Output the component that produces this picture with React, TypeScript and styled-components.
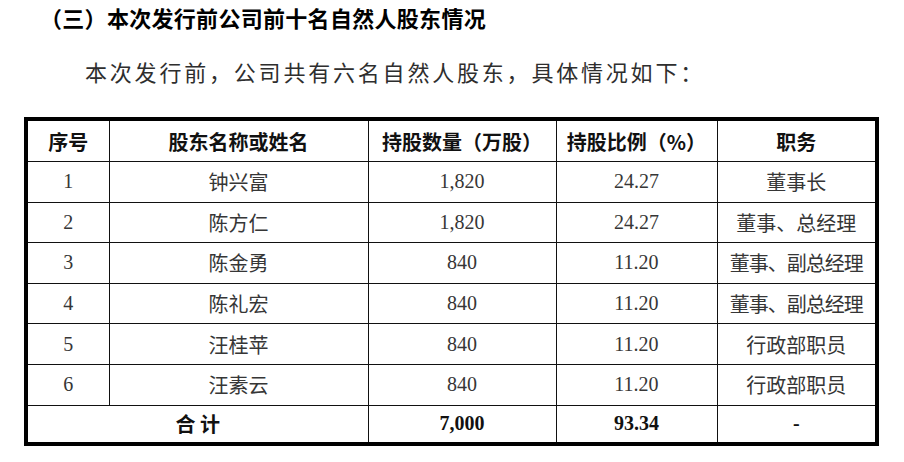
import styled, { createGlobalStyle } from "styled-components"

type Holder = {
  no: number
  name: string
  shares: string
  ratio: string
  post: string
}

const holders: Holder[] = [
  { no: 1, name: "钟兴富", shares: "1,820", ratio: "24.27", post: "董事长" },
  { no: 2, name: "陈方仁", shares: "1,820", ratio: "24.27", post: "董事、总经理" },
  { no: 3, name: "陈金勇", shares: "840", ratio: "11.20", post: "董事、副总经理" },
  { no: 4, name: "陈礼宏", shares: "840", ratio: "11.20", post: "董事、副总经理" },
  { no: 5, name: "汪桂苹", shares: "840", ratio: "11.20", post: "行政部职员" },
  { no: 6, name: "汪素云", shares: "840", ratio: "11.20", post: "行政部职员" },
]

const columns = [83, 259, 188, 161, 160]

const App = () => {
  return (
    <>
      <GlobalStyle />
      <Page>
        <Heading>（三）本次发行前公司前十名自然人股东情况</Heading>
        <Intro>本次发行前，公司共有六名自然人股东，具体情况如下：</Intro>
        <Table>
          <colgroup>
            {columns.map((w, i) => (
              <Col key={i} $w={w} />
            ))}
          </colgroup>
          <thead>
            <tr>
              <HeadCell>序号</HeadCell>
              <HeadCell>股东名称或姓名</HeadCell>
              <HeadCell>持股数量（万股）</HeadCell>
              <HeadCell>持股比例（%）</HeadCell>
              <HeadCell>职务</HeadCell>
            </tr>
          </thead>
          <tbody>
            {holders.map((h) => (
              <Row key={h.no}>
                <Cell>{h.no}</Cell>
                <Cell>{h.name}</Cell>
                <Cell>{h.shares}</Cell>
                <Cell>{h.ratio}</Cell>
                <Cell $tight={h.post.length > 6}>{h.post}</Cell>
              </Row>
            ))}
            <TotalRow>
              <TotalLabel colSpan={2}>合 计</TotalLabel>
              <TotalCell>7,000</TotalCell>
              <TotalCell>93.34</TotalCell>
              <TotalCell>-</TotalCell>
            </TotalRow>
          </tbody>
        </Table>
      </Page>
    </>
  )
}

const GlobalStyle = createGlobalStyle`
  html, body {
    margin: 0;
    padding: 0;
    background: #ffffff;
  }
`

const Page = styled.div`
  padding: 2px 24px 0;
  width: 904px;
  box-sizing: border-box;
`

const Heading = styled.h2`
  margin: 0 0 0 16px;
  font-family: "Noto Sans CJK SC", sans-serif;
  font-weight: 700;
  font-size: 22px;
  line-height: 30px;
  letter-spacing: 0.3px;
  color: #000;
`

const Intro = styled.p`
  margin: 27px 0 0 61px;
  font-family: "Liberation Serif", "Noto Sans CJK SC", serif;
  font-size: 22px;
  line-height: 30px;
  letter-spacing: 2.8px;
  color: #2e2e2e;
`

const Table = styled.table`
  margin-top: 28px;
  width: 854px;
  border-collapse: collapse;
  table-layout: fixed;
  border: 4px solid #000;
`

const Col = styled.col<{ $w: number }>`
  width: ${(p) => p.$w}px;
`

const HeadCell = styled.th`
  height: 40px;
  padding: 0;
  border: 1px solid #111;
  font-family: "Noto Sans CJK SC", sans-serif;
  font-weight: 700;
  font-size: 20px;
  color: #111;
  text-align: center;
  vertical-align: middle;
`

const Row = styled.tr`
  height: 40.6px;
`

const Cell = styled.td<{ $tight?: boolean }>`
  padding: 0;
  border: 1px solid #111;
  font-family: "Liberation Serif", "Noto Sans CJK SC", serif;
  font-size: 20px;
  color: #363636;
  text-align: center;
  vertical-align: middle;
  white-space: nowrap;
  letter-spacing: ${(p) => (p.$tight ? "-1px" : "0")};
`

const TotalRow = styled.tr`
  height: 39px;
`

const TotalLabel = styled.td`
  padding: 0;
  border: 1px solid #111;
  font-family: "Noto Sans CJK SC", sans-serif;
  font-weight: 700;
  font-size: 20px;
  color: #111;
  text-align: center;
  vertical-align: middle;
  white-space: pre;
`

const TotalCell = styled.td`
  padding: 0;
  border: 1px solid #111;
  font-family: "Liberation Serif", serif;
  font-weight: 700;
  font-size: 20px;
  color: #111;
  text-align: center;
  vertical-align: middle;
`

export default App
